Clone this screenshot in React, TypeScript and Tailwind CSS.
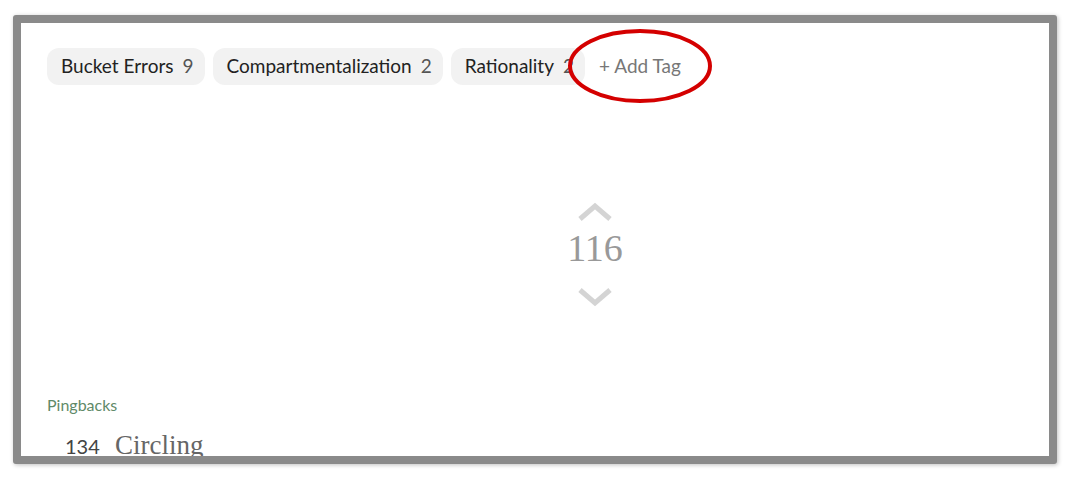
const tags = [
  { name: 'Bucket Errors', count: 9 },
  { name: 'Compartmentalization', count: 2 },
  { name: 'Rationality', count: 2 },
];

const sans = { fontFamily: 'Lato, "Open Sans", sans-serif' };

function Chevron({ down }: { down?: boolean }) {
  return (
    <svg width="36" height="20" viewBox="0 0 36 20" className="block">
      <polyline
        points={down ? '3,3 18,16 33,3' : '3,17 18,4 33,17'}
        fill="none"
        stroke="#d4d4d4"
        strokeWidth="5"
      />
    </svg>
  );
}

export default function App() {
  return (
    <div className="w-[1073px] h-[478px] bg-white pt-[15px] pl-[13px]">
      <div className="w-[1044px] h-[449px] border-8 border-[#8a8a8a] rounded-[3px] shadow-[1px_1px_4px_rgba(0,0,0,0.25)] overflow-hidden bg-white">
        <div className="pt-[25px] pl-[26px]">
          <div className="relative flex items-center gap-2" style={sans}>
            {tags.map((t) => (
              <div
                key={t.name}
                className="flex items-center h-[37px] pl-[14px] pr-[11px] rounded-[12px] bg-[#f2f2f2] text-[19px]"
              >
                <span className="text-[#222]">{t.name}</span>
                <span className="ml-[9px] text-[#555]">{t.count}</span>
              </div>
            ))}
            <div className="ml-[6px] text-[19px] text-[#777]">+ Add Tag</div>
            <svg
              width="150"
              height="80"
              viewBox="0 0 150 80"
              className="absolute left-[518px] top-[-22px] pointer-events-none"
            >
              <ellipse cx="75" cy="40" rx="70" ry="35" fill="none" stroke="#d40000" strokeWidth="4" />
            </svg>
          </div>
        </div>

        <div className="flex flex-col items-center pl-[120px] mt-[117px]">
          <Chevron />
          <div
            className="text-[38px] leading-[44px] text-[#999] mt-[4px] mb-[17px]"
            style={{ fontFamily: '"Liberation Serif", serif' }}
          >
            116
          </div>
          <Chevron down />
        </div>

        <div className="pl-[26px] mt-[86px]">
          <div className="text-[16px] text-[#5f8a68]" style={sans}>
            Pingbacks
          </div>
          <div className="flex items-baseline mt-[8px] pl-[18px]">
            <span className="text-[20px] text-[#444] w-[50px]" style={sans}>
              134
            </span>
            <span
              className="text-[27px] text-[#666]"
              style={{ fontFamily: '"Liberation Serif", serif' }}
            >
              Circling
            </span>
          </div>
        </div>
      </div>
    </div>
  );
}
